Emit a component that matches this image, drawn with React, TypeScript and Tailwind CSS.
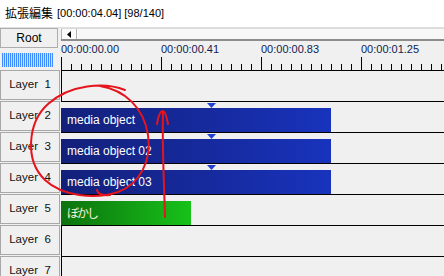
import React from "react";

const ticks = Array.from({ length: 39 }, (_, i) => i * 10);

function Marker() {
  return (
    <div className="h-[6px] pl-[146px] pt-[1px]">
      <svg width="9" height="5" viewBox="0 0 9 5" className="block">
        <polygon points="0,0 9,0 4.5,5" fill="#2040d4" />
      </svg>
    </div>
  );
}

function BlueBar({ label }: { label: string }) {
  return (
    <div className="h-[31px] border-t border-black flex flex-col">
      <Marker />
      <div className="h-[24px] w-[270px] bg-linear-to-r from-[#13207a] to-[#1833bd] flex items-center pl-[6px] text-white text-[12px] whitespace-nowrap">
        {label}
      </div>
    </div>
  );
}

export default function App() {
  const layers = [1, 2, 3, 4, 5, 6, 7];
  return (
    <div className="relative w-[444px] h-[276px] overflow-hidden bg-[#f0f0f0] font-['Liberation_Sans',sans-serif] text-black">
      <div className="h-[28px] bg-white flex items-center pl-[5px] pb-[2px] border-b border-[#dedede] whitespace-nowrap">
        <span className="text-[12px] font-['Noto_Sans_CJK_JP',sans-serif] leading-[14px]">拡張編集</span>
        <span className="text-[11px] ml-[4px] leading-[14px]">[00:00:04.04] [98/140]</span>
      </div>
      <div className="flex">
        <div className="w-[61px] shrink-0 flex flex-col">
          <div className="h-[20px] w-[58px] border border-[#adadad] flex items-center justify-center text-[12px]">Root</div>
          <div className="mt-[5px] ml-[2px] w-[51px] h-[14px] bg-[repeating-linear-gradient(90deg,#3d8bff_0px,#3d8bff_1px,#cde0fb_1px,#cde0fb_2px)]" />
          <div className="mt-[3px] flex flex-col gap-[1px]">
            {layers.map((n) => (
              <div key={n} className="h-[30px] w-[60px] shrink-0 border border-[#a8a8a8] flex items-center justify-center text-[11.5px] whitespace-nowrap text-[#111]">
                Layer&nbsp;&nbsp;{n}
              </div>
            ))}
          </div>
        </div>
        <div className="flex-1 flex flex-col">
          <div className="h-[13px] flex border-t border-[#dcdcdc] border-b-2 border-b-[#8c8c8c] bg-[#f4f4f4]">
            <div className="w-[16px] border-l border-r border-[#b4b4b4] bg-[#fbfbfb] flex items-center justify-center">
              <svg width="4" height="7" viewBox="0 0 4 7" className="block">
                <polygon points="4,0 4,7 0,3.5" fill="#000" />
              </svg>
            </div>
            <div className="flex-1 bg-[#f7f7f7]" />
          </div>
          <div className="h-[29px] flex flex-col">
            <div className="h-[16px] pt-[2px] flex text-[11px] leading-[13px] text-[#0e1d52] whitespace-nowrap">
              <div className="w-[100px] shrink-0">00:00:00.00</div>
              <div className="w-[100px] shrink-0">00:00:00.41</div>
              <div className="w-[100px] shrink-0">00:00:00.83</div>
              <div className="w-[100px] shrink-0">00:00:01.25</div>
            </div>
            <svg width="383" height="13" viewBox="0 0 383 13" className="block" shapeRendering="crispEdges">
              {ticks.map((x) => (
                <line key={x} x1={x + 0.5} x2={x + 0.5} y1={x % 100 === 0 ? 0 : 7} y2={13} stroke="#000" strokeWidth="1" />
              ))}
            </svg>
          </div>
          <div className="h-[31px] border-t border-l border-black" />
          <BlueBar label="media object" />
          <BlueBar label="media object 02" />
          <BlueBar label="media object 03" />
          <div className="h-[31px] border-t border-black flex flex-col">
            <div className="h-[6px]" />
            <div className="h-[24px] w-[130px] bg-linear-to-r from-[#0c730d] to-[#17c21a] flex items-center pl-[6px] text-[#f3f3dc] text-[12px] tracking-[-2px] font-['Noto_Sans_CJK_JP',sans-serif] whitespace-nowrap">
              ぼかし
            </div>
          </div>
          <div className="h-[31px] border-t border-l border-black" />
          <div className="h-[31px] border-t border-l border-black" />
        </div>
      </div>
      <svg className="absolute inset-0 pointer-events-none" width="444" height="276" viewBox="0 0 444 276">
        <path
          d="M125 90 C 105 82, 70 84, 48 104 C 28 122, 24 160, 45 180 C 62 196, 95 200, 118 192 C 140 184, 152 160, 148 135 C 144 108, 125 90, 100 86"
          fill="none"
          stroke="#e6141c"
          strokeWidth="2"
          strokeLinecap="round"
        />
        <path d="M97 190 Q 98 196, 110 195" fill="none" stroke="#e6141c" strokeWidth="2" strokeLinecap="round" />
        <path d="M165 217 C 164 180, 162 145, 163 112" fill="none" stroke="#e6141c" strokeWidth="2" strokeLinecap="round" />
        <path d="M157 124 Q 159 111, 163 111 Q 166 112, 168 124" fill="none" stroke="#e6141c" strokeWidth="2" strokeLinecap="round" />
      </svg>
    </div>
  );
}
